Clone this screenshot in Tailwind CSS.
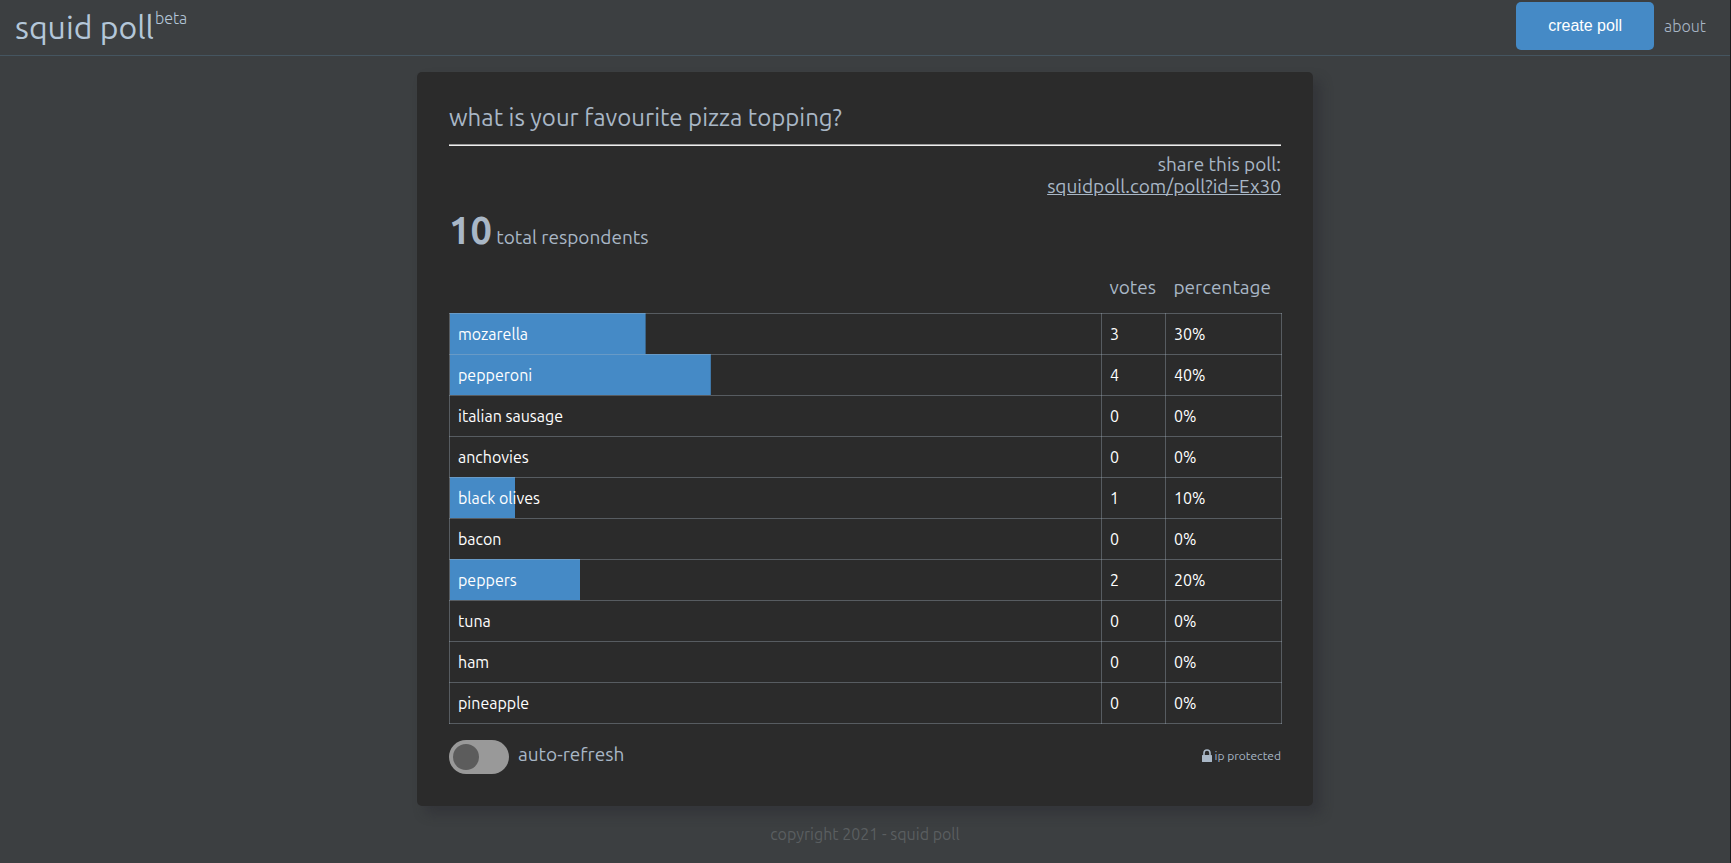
<!DOCTYPE html>
<html lang="en">
<head>
<meta charset="utf-8">
<meta name="viewport" content="width=device-width, initial-scale=1">
<title>squid poll</title>
<script src="https://cdn.jsdelivr.net/npm/@tailwindcss/browser@4"></script>
</head>
<body class="min-h-screen border-r border-[#1b1c1d] bg-[#3c3f41] font-['Ubuntu','Noto_Sans',sans-serif] text-[#a9b7c6]">
<header class="flex h-14 items-start justify-between border-b border-[#455560] pr-6 pl-[15px]">
  <a href="#" class="flex items-start text-[#b4c7d9]"><span class="pt-2 text-[32px] leading-[38px]">squid poll</span><sup class="top-0 pt-2 pl-px text-base leading-5 font-light">beta</sup></a>
  <nav class="flex items-center gap-2.5 pt-0.5">
    <button class="h-12 w-[138px] rounded-[5px] bg-[#458ac6] font-['Liberation_Sans',sans-serif] text-base text-white">create poll</button>
    <a href="#" class="text-base font-light">about</a>
  </nav>
</header>
<main class="mx-auto mt-4 max-w-[896px] rounded-[5px] bg-[#2b2b2b] px-8 pt-8 pb-8 shadow-[8px_8px_12px_0_rgba(43,43,48,0.45)]">
  <h1 class="text-2xl leading-7">what is your favourite pizza topping?</h1>
  <hr class="mt-3 h-0.5 border-t border-b border-t-[#9a9a9a] border-b-[#eeeeee]">
  <p class="mt-[7px] text-right text-[19px] leading-[22px]">share this poll:<br><a href="#" class="underline">squidpoll.com/poll?id=Ex30</a></p>
  <p class="mt-[9px] text-[19px] leading-[48px]"><strong class="text-[38px] leading-[48px]">10</strong> total respondents</p>
  <table class="w-[calc(100%+1px)] table-fixed border-collapse text-base leading-6 text-white">
    <colgroup><col><col class="w-16"><col class="w-[116px]"></colgroup>
    <thead>
      <tr class="h-[52px] text-left align-middle text-[19px] text-[#a9b7c6]"><td></td><th scope="col" class="px-2 font-normal">votes</th><th scope="col" class="px-2 font-normal">percentage</th></tr>
    </thead>
    <tbody id="results"></tbody>
  </table>
  <div class="flex items-start justify-between pt-4">
    <label class="flex items-start gap-[9px] text-[19px] leading-7">
      <input type="checkbox" class="flex h-[34px] w-[60px] appearance-none items-center rounded-full bg-[#999999] p-1 before:size-[26px] before:rounded-full before:bg-[#5c5c5c] checked:before:translate-x-[26px]">
      auto-refresh
    </label>
    <p class="flex items-center gap-[3px] text-xs leading-8">
      <svg class="h-[13px] w-2.5" viewBox="0 0 10 13" fill="none" aria-hidden="true"><rect y="6" width="10" height="7" rx="0.500" fill="#a9b7c6"/><path d="M2 6.500V4a3 3 0 0 1 6 0v2.500" stroke="#a9b7c6" stroke-width="1.600"/></svg>
      ip protected
    </p>
  </div>
</main>
<footer class="pt-4 pb-4 text-center text-base leading-6 text-[#5a5e60]">copyright 2021 - squid poll</footer>
<script>
const votes = [['mozarella', 3], ['pepperoni', 4], ['italian sausage', 0], ['anchovies', 0], ['black olives', 1], ['bacon', 0], ['peppers', 2], ['tuna', 0], ['ham', 0], ['pineapple', 0]];
const total = votes.reduce((sum, v) => sum + v[1], 0);
document.getElementById('results').innerHTML = votes.map(([name, n]) => {
  const pct = n / total * 100;
  return `<tr class="h-[41px]">
    <td class="border border-[#a9b7c6]/35 bg-[linear-gradient(#458ac6,#458ac6)] bg-origin-border bg-no-repeat px-2" style="background-size:${pct}% 100%">${name}</td>
    <td class="border border-[#a9b7c6]/35 px-2">${n}</td>
    <td class="border border-[#a9b7c6]/35 px-2">${pct}%</td>
  </tr>`;
}).join('');
</script>
</body>
</html>
